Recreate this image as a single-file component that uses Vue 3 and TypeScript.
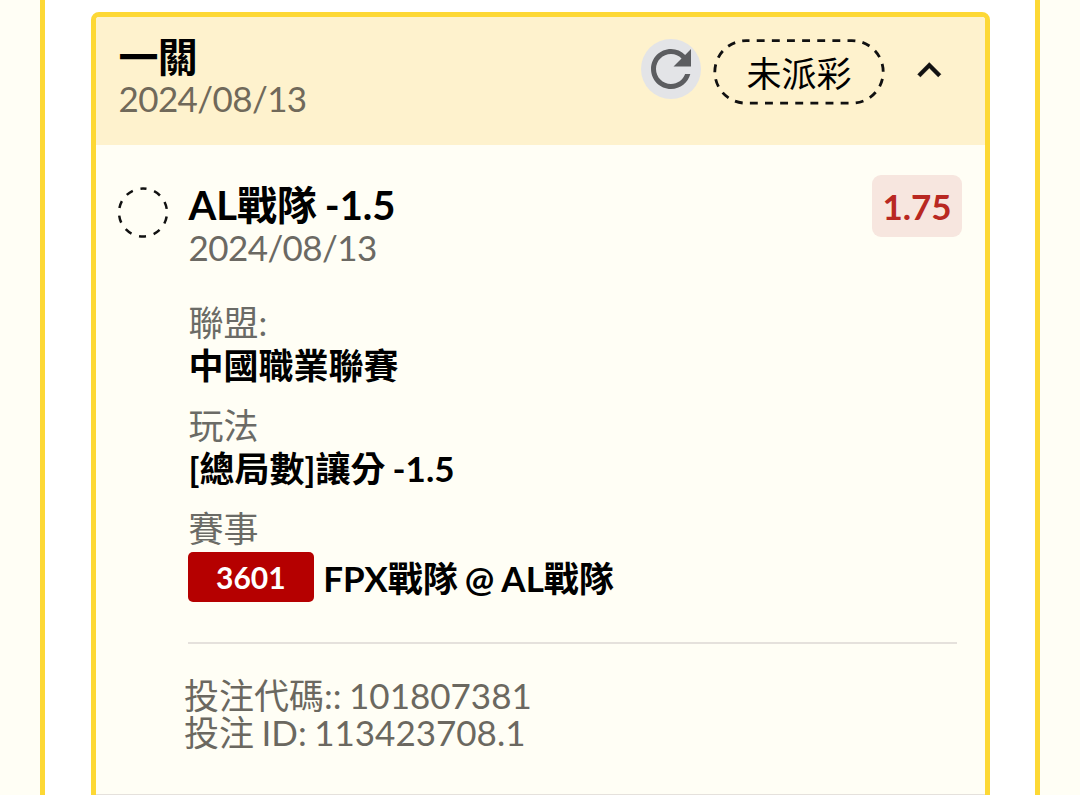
<script setup lang="ts">
interface Detail {
  label: string
  value: string
  code?: string
}

const details: Detail[] = [
  { label: '聯盟:', value: '中國職業聯賽' },
  { label: '玩法', value: '[總局數]讓分 -1.5' },
  { label: '賽事', value: 'FPX戰隊 @ AL戰隊', code: '3601' },
]
</script>

<template>
  <main class="page">
    <section class="panel">
      <article class="card">
        <header class="head">
          <div class="head-text">
            <h1 class="title head-title">一關</h1>
            <p class="date">2024/08/13</p>
          </div>
          <button class="refresh" aria-label="refresh">
            <svg width="60" height="60" viewBox="0 0 24 24">
              <path d="M17.65 6.35C16.2 4.9 14.21 4 12 4c-4.42 0-7.99 3.58-7.99 8s3.57 8 7.99 8c3.73 0 6.84-2.55 7.73-6h-2.08c-.82 2.33-3.04 4-5.65 4-3.31 0-6-2.69-6-6s2.69-6 6-6c1.66 0 3.14.69 4.22 1.78L13 11h7V4l-2.35 2.35z" fill="#5c5d60" />
            </svg>
          </button>
          <div class="status">
            <svg class="status-line" width="172" height="66" viewBox="0 0 172 66">
              <rect x="1.8" y="1.6" width="168.4" height="62.6" rx="31.3" fill="none" stroke="#111" stroke-width="2.8" stroke-dasharray="7.9 7.23" stroke-dashoffset="4.5" />
            </svg>
            <span>未派彩</span>
          </div>
          <svg class="chevron" width="46.6" height="46.6" viewBox="0 0 24 24">
            <path d="M12 8l-6 6 1.41 1.41L12 10.83l4.59 4.58L18 14z" fill="#111" stroke="#111" stroke-width="0.25" />
          </svg>
        </header>
        <div class="body">
          <svg class="pending" width="52" height="52" viewBox="0 0 52 52">
            <circle cx="26.5" cy="26" r="24" fill="none" stroke="#111" stroke-width="2.5" stroke-dasharray="7.2 7.88" stroke-dashoffset="3.6" transform="rotate(-90 26 26)" />
          </svg>
          <div class="content">
            <div class="pick">
              <div>
                <h2 class="title">AL戰隊 -1.5</h2>
                <p class="date">2024/08/13</p>
              </div>
              <span class="odds">1.75</span>
            </div>
            <dl class="details">
              <div v-for="d in details" :key="d.label" class="detail">
                <dt>{{ d.label }}</dt>
                <dd :class="{ match: d.code }"><span v-if="d.code" class="code">{{ d.code }}</span><span>{{ d.value }}</span></dd>
              </div>
            </dl>
            <hr class="rule">
            <div class="ids">
              <p>投注代碼:: 101807381</p>
              <p>投注 ID: 113423708.1</p>
            </div>
          </div>
        </div>
        <footer class="foot"></footer>
      </article>
    </section>
  </main>
</template>

<style>
body {
  margin: 0;
  overflow: hidden;
}
</style>

<style scoped>
.page {
  height: 795px;
  overflow: hidden;
  background: #fffef5;
  font-family: Lato, "Noto Sans CJK TC", sans-serif;
  font-size: 35px;
  word-spacing: -1.5px;
  color: #000;
}
.page * {
  box-sizing: border-box;
}
h1, h2, p, dl, dt, dd {
  margin: 0;
  white-space: nowrap;
}
.panel {
  width: 1000px;
  height: 830px;
  margin-left: 40px;
  padding: 12px 45.5px 0;
  background: #fff;
  border: solid #fdd835;
  border-width: 0 5px;
  box-sizing: border-box;
}
.card {
  height: 818px;
  border: 5px solid #fdd835;
  border-radius: 8px;
  background: #fffef5;
}
.head {
  display: flex;
  align-items: flex-start;
  height: 128px;
  padding: 18px 32px 0 23px;
  background: #fef2cd;
  border-radius: 3px 3px 0 0;
}
.head-text {
  flex: 1;
}
.title {
  font-size: 40px;
  line-height: 44px;
  font-weight: 700;
  letter-spacing: -0.1px;
}
.head-title {
  letter-spacing: -0.8px;
}
.date {
  line-height: 40px;
  letter-spacing: -0.6px;
  color: #6b6963;
}
.head .date {
  line-height: 39px;
  color: #70695a;
}
.refresh {
  width: 60px;
  height: 60px;
  margin: 4px 12px 0 0;
  padding: 0;
  border: 0;
  border-radius: 50%;
  background: #e3e4e7;
}
.refresh svg {
  display: block;
}
.status {
  position: relative;
  width: 172px;
  height: 66px;
  margin-top: 4px;
  line-height: 69px;
  text-align: center;
}
.status-line {
  position: absolute;
  inset: 0;
}
.chevron {
  margin: 12px 0 0 21px;
}
.body {
  display: flex;
  align-items: flex-start;
  height: 649px;
  padding: 30px 22.5px 0 21.5px;
}
.pending {
  flex: none;
  margin: 11.5px 19.6px 0 0;
}
.content {
  flex: 1;
}
.pick {
  display: flex;
  justify-content: space-between;
  align-items: flex-start;
}
.pick > div {
  padding-top: 8px;
}
.odds {
  width: 90px;
  height: 62px;
  border-radius: 9px;
  background: #f7e6df;
  color: #b92822;
  font-weight: 700;
  line-height: 63px;
  text-align: center;
}
.details {
  padding-top: 34px;
}
.detail {
  margin-bottom: 16px;
}
.detail:last-child {
  margin-bottom: 0;
}
dt {
  line-height: 42px;
  color: #6b6b66;
}
dd {
  line-height: 45px;
  font-weight: 700;
}
.match {
  display: flex;
  gap: 9.5px;
  margin-left: -0.8px;
  padding-top: 2.6px;
  line-height: 53px;
}
.code {
  width: 126px;
  height: 50px;
  border-radius: 5px;
  background: #b50000;
  color: #fff;
  font-size: 30px;
  line-height: 51px;
  text-align: center;
}
.rule {
  height: 2px;
  margin: 37.4px 5px 33px -0.8px;
  border: 0;
  background: #e5e1dc;
}
.ids {
  margin-left: -4.5px;
  line-height: 37.5px;
  color: #6b6860;
}
.foot {
  height: 2px;
  background: #e5e1dc;
}
</style>
